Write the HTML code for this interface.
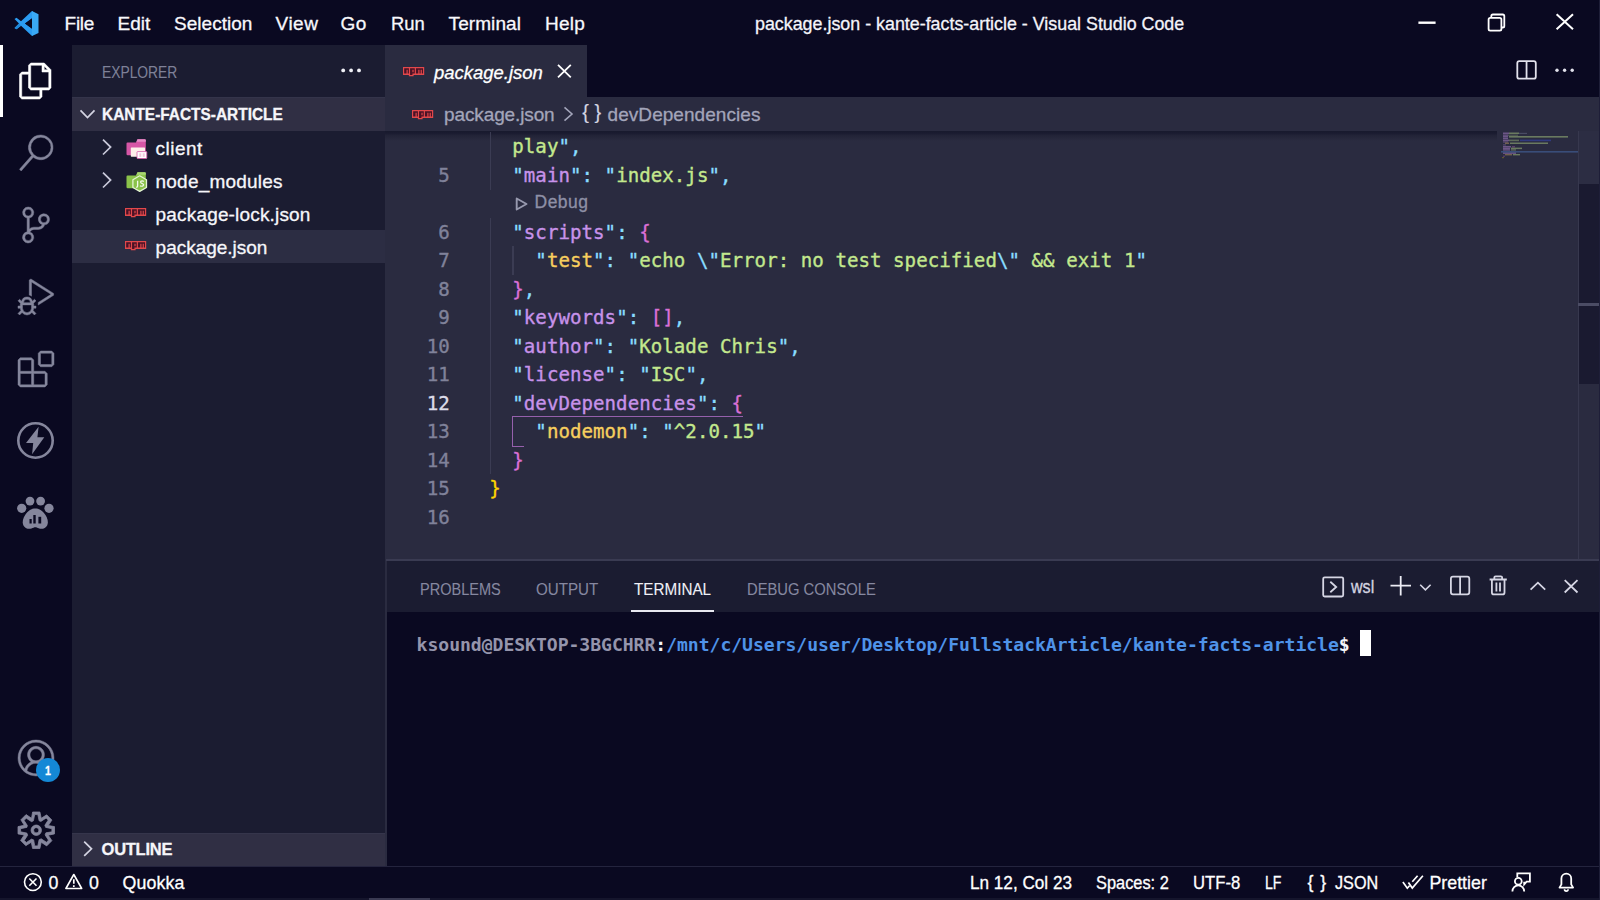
<!DOCTYPE html><html lang="en"><head><meta charset="utf-8"><title>package.json - kante-facts-article - Visual Studio Code</title>
<style>
html,body{margin:0;padding:0;background:#0a0921;}
body{width:1600px;height:900px;overflow:hidden;position:relative;font-family:"Liberation Sans", sans-serif;-webkit-font-smoothing:antialiased;}
.b{position:absolute;}
.t{position:absolute;white-space:pre;line-height:1;transform-origin:0 50%;-webkit-text-stroke:0.3px currentColor;}
.c{position:absolute;white-space:pre;line-height:1;font-family:"DejaVu Sans Mono", "Liberation Mono", monospace;font-size:19.1px;-webkit-text-stroke:0.35px currentColor;}
.tm{position:absolute;white-space:pre;line-height:1;font-family:"DejaVu Sans Mono", "Liberation Mono", monospace;font-size:18.1px;font-weight:700;}
svg{position:absolute;overflow:visible;}
</style></head><body>
<!-- layout boxes -->
<div class="b" style="left:72px;top:45px;width:313px;height:821px;background:#1b1c31"></div>
<div class="b" style="left:72px;top:97px;width:313px;height:33.5px;background:#302f44;border-top:1px solid #34344a;box-sizing:border-box"></div>
<div class="b" style="left:72px;top:230px;width:313px;height:33px;background:#2c2d43"></div>
<div class="b" style="left:72px;top:833px;width:313px;height:33px;background:#302f44;border-top:1px solid #35354b;box-sizing:border-box"></div>
<div class="b" style="left:0;top:45px;width:3px;height:72px;background:#ffffff"></div>
<!-- editor group -->
<div class="b" style="left:385px;top:45px;width:202px;height:52px;background:#2a2b40"></div>
<div class="b" style="left:385px;top:97px;width:1215px;height:463px;background:#2a2b40"></div>
<div class="b" style="left:385px;top:560px;width:2px;height:306px;background:#2a2b40"></div>
<div class="b" style="left:385px;top:130.500px;width:1112px;height:10px;background:linear-gradient(#181a2d 0%,#1a1b30 22%,rgba(31,32,52,.75) 45%,rgba(42,43,64,0) 100%)"></div>
<!-- scrollbar -->
<div class="b" style="left:1578px;top:131px;width:1px;height:429px;background:#37384e"></div>
<div class="b" style="left:1579px;top:131px;width:20px;height:53px;background:#2c2d43"></div>
<div class="b" style="left:1579px;top:184px;width:20px;height:200px;background:#1a1a30"></div>
<div class="b" style="left:1578px;top:303px;width:21px;height:3px;background:#4b4c64"></div>
<!-- current line guides etc -->
<div class="b" style="left:489.5px;top:132px;width:1.5px;height:57.5px;background:#3b3c53"></div>
<div class="b" style="left:489.5px;top:218px;width:1.5px;height:256px;background:#3b3c53"></div>
<div class="b" style="left:512px;top:246px;width:1.5px;height:28.5px;background:#3b3c53"></div>
<!-- active bracket pair guide -->
<div class="b" style="left:511.5px;top:415.5px;width:231px;height:1.5px;background:#9560ac"></div>
<div class="b" style="left:511.5px;top:415.5px;width:1.5px;height:31.5px;background:#9560ac"></div>
<div class="b" style="left:511.5px;top:445.5px;width:12px;height:1.5px;background:#9560ac"></div>
<!-- panel -->
<div class="b" style="left:386px;top:559.3px;width:1214px;height:1.5px;background:#3a3b52"></div>
<div class="b" style="left:387px;top:561px;width:1213px;height:51px;background:#1b1c31"></div>
<div class="b" style="left:631px;top:610.3px;width:83px;height:1.7px;background:#e8e8f0"></div>
<div class="b" style="left:1360px;top:630px;width:11px;height:25.6px;background:#ffffff"></div>
<!-- status bar -->
<div class="b" style="left:0;top:866px;width:1600px;height:1px;background:#24243e"></div>
<div class="b" style="left:0;top:898.300px;width:1600px;height:1.700px;background:#15152c"></div>
<div class="b" style="left:369px;top:898.300px;width:61px;height:1.700px;background:#3a3a52"></div>
<div class="b" style="left:1599px;top:0;width:1px;height:900px;background:#1e1e38"></div>
<!-- minimap -->
<svg style="left:1500px;top:131px" width="78" height="30" viewBox="1500 131 78 30">
<g opacity=".42">
<rect x="1503" y="132.500" width="6" height="1.500" fill="#c792ea"/><rect x="1509" y="132.500" width="10" height="1.500" fill="#c3e88d"/><rect x="1519" y="132.800" width="8" height="1.200" fill="#a6accd" opacity=".6"/>
<rect x="1503" y="134.500" width="5" height="1.300" fill="#c792ea"/><rect x="1508" y="134.600" width="10" height="1.200" fill="#c3e88d" opacity=".6"/>
<rect x="1503" y="136" width="5" height="1.600" fill="#c792ea"/><rect x="1509" y="136" width="59" height="1.600" fill="#c3e88d"/>
<rect x="1503" y="138" width="5" height="1.200" fill="#c792ea"/>
<rect x="1503" y="139.600" width="6" height="1.600" fill="#c792ea"/><rect x="1509" y="139.600" width="10" height="1.600" fill="#c3e88d" opacity=".8"/><rect x="1520" y="139.600" width="31" height="1.600" fill="#3c50d8"/>
<rect x="1503" y="141.400" width="5" height="1.200" fill="#c792ea" opacity=".8"/>
<rect x="1505" y="142.500" width="4" height="1.500" fill="#ffcb6b" opacity=".8"/><rect x="1510" y="142.500" width="38" height="1.500" fill="#c3e88d"/>
<rect x="1503" y="144.300" width="3" height="1.200" fill="#c792ea" opacity=".7"/>
<rect x="1503" y="146" width="8" height="1.500" fill="#c792ea"/><rect x="1512" y="146" width="3" height="1.500" fill="#da70d6" opacity=".7"/>
<rect x="1503" y="147.600" width="7" height="1.500" fill="#c792ea"/><rect x="1511" y="147.600" width="11" height="1.500" fill="#c3e88d"/>
<rect x="1503" y="149.200" width="7" height="1.400" fill="#c792ea"/><rect x="1511" y="149.200" width="5" height="1.400" fill="#c3e88d" opacity=".8"/>
<rect x="1503" y="152.400" width="13" height="1.500" fill="#c792ea"/>
<rect x="1505" y="154" width="7" height="1.400" fill="#ffcb6b" opacity=".8"/><rect x="1513" y="154" width="7" height="1.400" fill="#c3e88d"/>
<rect x="1503" y="155.600" width="2" height="1.200" fill="#da70d6" opacity=".7"/>
<rect x="1502" y="157" width="2" height="1.200" fill="#ffd700" opacity=".6"/>
</g>
<rect x="1501" y="151" width="77" height="1.600" fill="#3f5a8c" opacity=".75"/>
</svg>

<!-- ===== icons ===== -->
<!-- vscode logo -->
<svg style="left:14px;top:10.500px" width="25" height="25" viewBox="0 0 100 100">
<path d="M72 0 28 41 10 27 2 32 20 50 2 68 10 73 28 59 72 100 74 99V71L44 50 74 29V1z" fill="#2b9cf2"/>
<path d="M10 73 2 68 20 50 28 59z" fill="#1f86d6"/>
<path d="M72 0 98 12.500v75L72 100z" fill="#3aa9f5"/>
<path d="M72 29v42L44 50z" fill="#0a0921"/>
</svg>
<!-- activity bar -->
<svg style="left:18px;top:63px" width="36" height="36" viewBox="0 0 24 24" fill="#ffffff" stroke="#ffffff" stroke-width=".35"><path d="M17.5 0h-9L7 1.5V6H2.500L1 7.500v15.070L2.500 24h12.070L16 22.570V18h4.700l1.300-1.430V4.500L17.500 0zm0 2.120l2.380 2.380H17.500V2.120zm-3 20.380h-12v-15H7v9.070L8.500 18h6v4.500zm6-6h-12v-15H16V6h4.500v10.500z"/></svg>
<svg style="left:18px;top:135px" width="36" height="36" viewBox="0 0 24 24" fill="#85869c" stroke="#85869c" stroke-width=".3"><path d="M15.250 0a8.250 8.250 0 0 0-6.180 13.720L1 22.880l1.120 1.120 8.050-9.120A8.251 8.251 0 1 0 15.250.010V0zm0 15a6.750 6.750 0 1 1 0-13.500 6.750 6.750 0 0 1 0 13.500z"/></svg>
<svg style="left:18px;top:207px" width="36" height="36" viewBox="0 0 24 24" fill="#85869c" stroke="#85869c" stroke-width=".3"><path d="M21.007 8.222A3.738 3.738 0 0 0 15.045 5.200a3.737 3.737 0 0 0 1.156 6.583 2.988 2.988 0 0 1-2.668 1.670h-2.990a4.456 4.456 0 0 0-2.989 1.165V7.400a3.737 3.737 0 1 0-1.494 0v9.117a3.776 3.776 0 1 0 1.816.099 2.990 2.990 0 0 1 2.668-1.667h2.990a4.484 4.484 0 0 0 4.223-3.039 3.736 3.736 0 0 0 3.250-3.687zM4.565 3.738a2.242 2.242 0 1 1 4.484 0 2.242 2.242 0 0 1-4.484 0zm4.484 16.441a2.242 2.242 0 1 1-4.484 0 2.242 2.242 0 0 1 4.484 0zm8.221-9.715a2.242 2.242 0 1 1 0-4.485 2.242 2.242 0 0 1 0 4.485z"/></svg>
<svg style="left:18px;top:279px" width="36" height="36" viewBox="0 0 24 24" fill="#85869c" stroke="#85869c" stroke-width=".3"><path d="M10.940 13.500l-1.320 1.320a3.730 3.730 0 0 0-7.240 0L1.060 13.500 0 14.560l1.720 1.720-.22.220V18H0v1.500h1.500v.080c.077.489.214.966.410 1.420L0 22.940 1.060 24l1.650-1.650A4.308 4.308 0 0 0 6 24a4.310 4.310 0 0 0 3.290-1.650L10.940 24 12 22.940 10.090 21c.198-.464.336-.951.410-1.450v-.100H12V18h-1.500v-1.500l-.22-.22L12 14.560l-1.060-1.060zM6 13.500a2.250 2.250 0 0 1 2.250 2.250h-4.500A2.250 2.250 0 0 1 6 13.500zm3 6a3.330 3.330 0 0 1-3 3 3.330 3.330 0 0 1-3-3v-2.250h6v2.250zm14.760-9.900v1.260L13.500 17.370V15.600l8.500-5.370L9 2v9.460a5.070 5.070 0 0 0-1.500-.72V.630L8.640 0l15.120 9.600z"/></svg>
<svg style="left:18px;top:351px" width="36" height="36" viewBox="0 0 24 24" fill="#85869c" stroke="#85869c" stroke-width=".3"><path d="M13.500 1.500L15 0h7.500L24 1.500V9l-1.500 1.500H15L13.500 9V1.500zm1.500 0V9h7.500V1.500H15zM0 15V6l1.500-1.500H9L10.500 6v7.500H18l1.500 1.500v7.500L18 24H1.500L0 22.500V15zm9-1.500V6H1.500v7.500H9zM9 15H1.500v7.500H9V15zm1.500 7.500H18V15h-7.500v7.500z"/></svg>
<!-- thunder -->
<svg style="left:16px;top:421px" width="40" height="40" viewBox="16 421 40 40"><circle cx="35.5" cy="440.5" r="17.2" fill="none" stroke="#85869c" stroke-width="2.600"/><path d="M38.600 426.800 26 443h7.200l-1.100 11.200 12.200-16.900h-6.900z" fill="#85869c"/></svg>
<!-- paw -->
<svg style="left:16px;top:494px" width="40" height="38" viewBox="16 494 40 38" fill="#85869c"><circle cx="21.700" cy="508.300" r="4.600"/><circle cx="30" cy="501.100" r="4.400"/><circle cx="40.600" cy="501.100" r="4.400"/><circle cx="49" cy="508.300" r="4.600"/>
<path d="M35.300 508.600c4.200 0 7.600 2.600 10 6.200 2.200 3.300 3.400 7.300 2 10.400-1.500 3.300-5.300 4.200-8.200 3.300-1.500-.5-2.600-1.200-3.800-1.200s-2.300.7-3.800 1.200c-2.900.9-6.700 0-8.200-3.300-1.400-3.100-.2-7.100 2-10.400 2.400-3.600 5.800-6.200 10-6.200z"/>
<rect x="29.500" y="519" width="2.200" height="4.500" fill="#0a0921"/><rect x="33.300" y="515" width="2.400" height="8.500" fill="#0a0921"/><rect x="38.400" y="516.800" width="2.800" height="6.700" fill="#0a0921"/></svg>
<!-- account -->
<svg style="left:17.500px;top:740px" width="36" height="36" viewBox="0 0 16 16" fill="#85869c" stroke="#85869c" stroke-width=".2"><path d="M16 7.992C16 3.580 12.416 0 8 0S0 3.580 0 7.992c0 2.430 1.104 4.620 2.832 6.090.016.016.032.016.032.032.144.112.288.224.448.336.080.048.144.111.224.175A7.980 7.980 0 0 0 8.016 16a7.980 7.980 0 0 0 4.480-1.375c.080-.048.144-.111.224-.160.144-.111.304-.223.448-.335.016-.016.032-.016.032-.032 1.696-1.487 2.800-3.676 2.800-6.106zm-8 7.001c-1.504 0-2.880-.480-4.016-1.279.016-.128.048-.255.080-.383a4.170 4.170 0 0 1 .416-.991c.176-.304.384-.576.640-.816.240-.240.528-.463.816-.639.304-.176.624-.304.976-.400A4.150 4.150 0 0 1 8 10.342a4.185 4.185 0 0 1 2.928 1.166c.368.368.656.800.864 1.295.112.288.192.592.240.911A7.030 7.030 0 0 1 8 14.993zm-2.448-7.400a2.490 2.490 0 0 1-.208-1.024c0-.351.064-.703.208-1.023.144-.320.336-.607.576-.847.240-.240.528-.431.848-.575.320-.144.672-.208 1.024-.208.368 0 .704.064 1.024.208.320.144.608.336.848.575.240.240.432.528.576.847.144.320.208.672.208 1.023 0 .368-.064.704-.208 1.023a2.840 2.840 0 0 1-.576.848 2.840 2.840 0 0 1-.848.575 2.715 2.715 0 0 1-2.064 0 2.840 2.840 0 0 1-.848-.575 2.526 2.526 0 0 1-.560-.848zm7.424 5.306c0-.032-.016-.048-.016-.080a5.220 5.220 0 0 0-.688-1.406 4.883 4.883 0 0 0-1.088-1.135 5.207 5.207 0 0 0-1.040-.608 2.820 2.820 0 0 0 .464-.383 4.200 4.200 0 0 0 .624-.784 3.624 3.624 0 0 0 .528-1.934 3.710 3.710 0 0 0-.288-1.470 3.799 3.799 0 0 0-.816-1.199 3.845 3.845 0 0 0-1.200-.800 3.720 3.720 0 0 0-1.472-.287 3.720 3.720 0 0 0-1.472.288 3.631 3.631 0 0 0-1.200.815 3.840 3.840 0 0 0-.800 1.199 3.710 3.710 0 0 0-.288 1.470c0 .352.048.688.144 1.007.096.336.224.640.400.927.160.288.384.544.624.784.144.144.304.271.480.383a5.120 5.120 0 0 0-1.040.624c-.416.320-.784.703-1.088 1.119a4.999 4.999 0 0 0-.688 1.406c-.016.032-.016.064-.016.080C1.776 11.636.992 9.910.992 7.992.992 4.140 4.144.991 8 .991s7.008 3.149 7.008 7.001a6.960 6.960 0 0 1-2.032 4.907z"/></svg>
<svg style="left:36px;top:757.700px" width="24" height="24" viewBox="0 0 24 24"><circle cx="12" cy="12" r="12" fill="#1488d6"/></svg>
<!-- gear -->
<svg style="left:17.500px;top:811.700px" width="36.500" height="36.500" viewBox="1 1 14 14" fill="#85869c" stroke="#85869c" stroke-width=".3"><path d="M9.100 4.400L8.600 2H7.400l-.5 2.400-.7.300-2-1.300-.9.800 1.300 2-.2.700-2.400.5v1.200l2.400.5.300.8-1.300 2 .8.800 2-1.300.8.300.4 2.300h1.200l.5-2.400.8-.3 2 1.300.8-.8-1.300-2 .3-.8 2.300-.4V7.400l-2.400-.5-.3-.8 1.300-2-.8-.8-2 1.300-.7-.2zM9.400 1l.5 2.400L12 2.100l2 2-1.400 2.100 2.400.4v2.800l-2.400.5L14 12l-2 2-2.100-1.400-.5 2.400H6.600l-.5-2.400L4 13.900l-2-2 1.400-2.100L1 9.400V6.600l2.400-.5L2.100 4l2-2 2.100 1.400.4-2.400h2.800zm.6 7c0 1.100-.9 2-2 2s-2-.9-2-2 .9-2 2-2 2 .9 2 2zM8 9c.6 0 1-.4 1-1s-.4-1-1-1-1 .4-1 1 .4 1 1 1z"/></svg>
<!-- sidebar: more dots -->
<svg style="left:340px;top:66px" width="22" height="9" viewBox="340 66 22 9" fill="#f0f0f6"><circle cx="343.200" cy="70.400" r="1.900"/><circle cx="351.100" cy="70.400" r="1.900"/><circle cx="359" cy="70.400" r="1.900"/></svg>
<!-- chevrons -->
<svg style="left:78px;top:106px" width="20" height="16" viewBox="78 106 20 16" fill="none" stroke="#d4d4e2" stroke-width="1.700"><path d="M80.500 110.300 87.500 117.600 94.500 110.300"/></svg>
<svg style="left:100px;top:137px" width="14" height="20" viewBox="100 137 14 20" fill="none" stroke="#c9c9da" stroke-width="1.700"><path d="M103 139.700 110.600 147.100 103 154.500"/></svg>
<svg style="left:100px;top:170px" width="14" height="20" viewBox="100 170 14 20" fill="none" stroke="#c9c9da" stroke-width="1.700"><path d="M103 172.700 110.600 180.100 103 187.500"/></svg>
<svg style="left:80px;top:839px" width="14" height="20" viewBox="80 839 14 20" fill="none" stroke="#d4d4e2" stroke-width="1.700"><path d="M84.200 841.700 91.500 848.800 84.200 855.900"/></svg>
<!-- folder client -->
<svg style="left:124px;top:137px" width="26" height="24" viewBox="124 137 26 24">
<path d="M126.500 143.500a1 1 0 0 1 1-1h8.500l1.500-3.200h7.300a1 1 0 0 1 1 1v13.800a1.200 1.200 0 0 1-1.200 1.200H127.700a1.200 1.200 0 0 1-1.200-1.200z" fill="#d656a6"/>
<path d="M137.500 139.300h7.300a1 1 0 0 1 1 1v1.400h-9.400z" fill="#e58bc6"/>
<rect x="130.800" y="147.400" width="14.200" height="9.300" rx=".6" fill="#fdf0ea"/>
<rect x="137" y="151.600" width="9.800" height="6.900" rx=".6" fill="#ffffff" stroke="#d656a6" stroke-width=".8"/>
<rect x="139.300" y="153.300" width="2" height="3.600" fill="#f3c8dc"/><rect x="142.700" y="153.300" width="2" height="3.600" fill="#f3c8dc"/>
</svg>
<!-- folder node -->
<svg style="left:124px;top:170px" width="26" height="24" viewBox="124 170 26 24">
<path d="M126.500 176.500a1 1 0 0 1 1-1h8.500l1.500-3.200h7.300a1 1 0 0 1 1 1v13.800a1.200 1.200 0 0 1-1.200 1.200H127.700a1.200 1.200 0 0 1-1.200-1.200z" fill="#8bc34a"/>
<path d="M137.500 172.300h7.300a1 1 0 0 1 1 1v1.400h-9.400z" fill="#a9d672"/>
<path d="M139.700 175.800 146.500 179.700v7.800L139.700 191.400 132.900 187.500v-7.800z" fill="#8bc34a" stroke="#e4f3d2" stroke-width="1.300" stroke-linejoin="round"/>
<path d="M137.600 180.800v5.200q0 1.300-1.500 1.100" fill="none" stroke="#f2f9ea" stroke-width="1.300"/>
<path d="M143.800 181.500q-1.200-.9-2.500-.4-1.300.8-.1 1.900l1.800.9q1.300.9 0 2-1.500.8-3-.2" fill="none" stroke="#f2f9ea" stroke-width="1.200"/>
</svg>
<!-- npm icons -->
<svg style="left:124.90px;top:208.00px" width="21.20" height="9.20" viewBox="0 0 18 7" preserveAspectRatio="none"><path d="M0 0h18v6H9v1H5V6H0z" fill="#e2484b"/><path d="M1 1h4v4H4V2H3v3H1zM6 1h4v4H8v1H6zM11 1h6v4h-1V2h-1v3h-1V2h-1v3h-2z" fill="#4a1226"/><path d="M8 2h1v2H8z" fill="#e2484b"/></svg>
<svg style="left:124.90px;top:241.20px" width="21.20" height="9.20" viewBox="0 0 18 7" preserveAspectRatio="none"><path d="M0 0h18v6H9v1H5V6H0z" fill="#e2484b"/><path d="M1 1h4v4H4V2H3v3H1zM6 1h4v4H8v1H6zM11 1h6v4h-1V2h-1v3h-1V2h-1v3h-2z" fill="#4a1226"/><path d="M8 2h1v2H8z" fill="#e2484b"/></svg>
<svg style="left:403.00px;top:66.60px" width="21.20" height="9.20" viewBox="0 0 18 7" preserveAspectRatio="none"><path d="M0 0h18v6H9v1H5V6H0z" fill="#e2484b"/><path d="M1 1h4v4H4V2H3v3H1zM6 1h4v4H8v1H6zM11 1h6v4h-1V2h-1v3h-1V2h-1v3h-2z" fill="#4a1226"/><path d="M8 2h1v2H8z" fill="#e2484b"/></svg>
<svg style="left:411.70px;top:110.40px" width="21.20" height="9.20" viewBox="0 0 18 7" preserveAspectRatio="none"><path d="M0 0h18v6H9v1H5V6H0z" fill="#e2484b"/><path d="M1 1h4v4H4V2H3v3H1zM6 1h4v4H8v1H6zM11 1h6v4h-1V2h-1v3h-1V2h-1v3h-2z" fill="#4a1226"/><path d="M8 2h1v2H8z" fill="#e2484b"/></svg>
<!-- window controls -->
<svg style="left:1410px;top:8px" width="180" height="30" viewBox="1410 8 180 30" fill="none" stroke="#ffffff" stroke-width="2">
<path d="M1418.400 22.700H1435.600" stroke-width="2.400"/>
<path d="M1491.300 17.400v-1.300a1.600 1.600 0 0 1 1.600-1.600h9.800a1.600 1.600 0 0 1 1.600 1.600v9.800a1.600 1.600 0 0 1-1.600 1.600h-1.300" stroke-width="1.800"/>
<rect x="1488.600" y="17.800" width="12.800" height="12.800" rx="1.600" stroke-width="1.800"/>
<path d="M1556.600 14.300 1573 29.300M1573 14.300 1556.600 29.300"/>
</svg>
<!-- tab actions -->
<svg style="left:1510px;top:56px" width="70" height="28" viewBox="1510 56 70 28"><rect x="1517.300" y="61.200" width="18.500" height="17.500" rx="2" fill="none" stroke="#e2e2ec" stroke-width="1.800"/><path d="M1526.550 61.200v17.500" stroke="#e2e2ec" stroke-width="1.800"/><circle cx="1557" cy="70.300" r="1.700" fill="#e2e2ec"/><circle cx="1564.600" cy="70.300" r="1.700" fill="#e2e2ec"/><circle cx="1572.200" cy="70.300" r="1.700" fill="#e2e2ec"/></svg>
<!-- tab close -->
<svg style="left:554px;top:61px" width="20" height="20" viewBox="554 61 20 20" fill="none" stroke="#ffffff" stroke-width="1.800"><path d="M558 64.900 570.800 77.300M570.800 64.900 558 77.300"/></svg>
<!-- breadcrumb chevron -->
<svg style="left:560px;top:105px" width="16" height="20" viewBox="560 105 16 20" fill="none" stroke="#a3a5ba" stroke-width="1.600"><path d="M564.500 107.300 572 114 564.500 120.700"/></svg>
<!-- codelens triangle -->
<svg style="left:512px;top:194px" width="20" height="20" viewBox="512 194 20 20" fill="none" stroke="#9799ae" stroke-width="1.900" stroke-linejoin="round"><path d="M516.700 198.500 526.500 204 516.700 209.500z"/></svg>
<!-- panel actions -->
<svg style="left:1316px;top:570px" width="270" height="32" viewBox="1316 570 270 32" fill="none" stroke="#d6d6e4" stroke-width="1.800">
<rect x="1323.200" y="577.300" width="20" height="19.200" rx="1.500"/>
<path d="M1330.300 581.800 1336.200 587 1330.300 592.200"/>
<path d="M1390.500 585.700H1411M1400.700 575.900V595.600" stroke="#ececf4"/>
<path d="M1420.200 584.700 1425.400 589.900 1430.600 584.700" stroke-width="1.600"/>
<rect x="1450.900" y="576.700" width="18.400" height="17.600" rx="2"/><path d="M1460.100 576.700v17.600"/>
<path d="M1489.600 579.500H1506.800M1494.300 579.300v-1.700a1.300 1.300 0 0 1 1.300-1.300h5.200a1.300 1.300 0 0 1 1.300 1.300v1.700M1491.900 580v12.400a2 2 0 0 0 2 2h8.600a2 2 0 0 0 2-2V580M1496.400 582.500v9M1500 582.500v9"/>
<path d="M1530.600 589.600 1537.900 582.700 1545.200 589.600"/>
<path d="M1564.700 580.200 1577.500 592.500M1577.500 580.200 1564.700 592.500"/>
</svg>
<!-- status icons -->
<svg style="left:20px;top:868px" width="70" height="28" viewBox="20 868 70 28" fill="none" stroke="#ffffff" stroke-width="1.600">
<circle cx="32.900" cy="882.100" r="8.400"/><path d="M29.300 878.500 36.500 885.700M36.500 878.500 29.300 885.700"/>
<path d="M73.800 874.500 81.700 888.500H65.900z" stroke-linejoin="round"/><path d="M73.800 879.200v4.600M73.800 885.300v1.700" stroke-width="1.700"/>
</svg>
<svg style="left:1398px;top:868px" width="190" height="30" viewBox="1398 868 190 30" fill="none" stroke="#ffffff" stroke-width="1.700">
<path d="M1402.900 882 1407.300 888.200 1409.500 885.700M1408.400 882.400 1412.300 888 1422.900 875.700M1412.300 881.800 1417.600 875.700"/>
<path d="M1517.300 877v-3.600h12.600v8.300h-3.300l-2.400 2.700v-2.700" stroke-width="1.800"/><circle cx="1518.300" cy="881.300" r="3.400" stroke-width="1.800"/><path d="M1512.400 891.400a5.900 6.100 0 0 1 11.800 0" stroke-width="1.800"/>
<path d="M1559.500 887.600 1561.400 884.400V878.500a4.900 4.900 0 0 1 9.800 0V884.400L1573.100 887.600Z" stroke-width="1.800" stroke-linejoin="round"/><path d="M1564.500 889.300a1.800 1.800 0 0 0 3.600 0" stroke-width="1.600"/>
</svg>

<span class="t" style="left:64.60px;top:13.60px;font-size:19px;color:#f8f8fc;letter-spacing:-0.275px">File</span>
<span class="t" style="left:117.60px;top:13.60px;font-size:19px;color:#f8f8fc;letter-spacing:0.017px">Edit</span>
<span class="t" style="left:174.10px;top:13.60px;font-size:19px;color:#f8f8fc;letter-spacing:0.016px">Selection</span>
<span class="t" style="left:275.60px;top:13.60px;font-size:19px;color:#f8f8fc;letter-spacing:0.485px">View</span>
<span class="t" style="left:340.60px;top:13.60px;font-size:19px;color:#f8f8fc;letter-spacing:0.441px">Go</span>
<span class="t" style="left:390.60px;top:13.60px;font-size:19px;color:#f8f8fc;transform:scaleX(0.9696)">Run</span>
<span class="t" style="left:448.60px;top:13.60px;font-size:19px;color:#f8f8fc;letter-spacing:0.070px">Terminal</span>
<span class="t" style="left:545.10px;top:13.60px;font-size:19px;color:#f8f8fc;letter-spacing:0.241px">Help</span>
<span class="t" style="left:755.40px;top:13.80px;font-size:19px;color:#f4f4fa;transform:scaleX(0.9393)">package.json - kante-facts-article - Visual Studio Code</span>
<span class="t" style="left:102.10px;top:64.00px;font-size:16.5px;color:#7f8198;transform:scaleX(0.8378);-webkit-text-stroke-width:0.1px">EXPLORER</span>
<span class="t" style="left:102.10px;top:106.00px;font-size:16.5px;color:#f6f6fa;font-weight:700;transform:scaleX(0.9348)">KANTE-FACTS-ARTICLE</span>
<span class="t" style="left:155.60px;top:138.50px;font-size:19px;color:#f6f6fa;letter-spacing:0.488px">client</span>
<span class="t" style="left:155.60px;top:171.50px;font-size:19px;color:#f6f6fa;letter-spacing:0.195px">node_modules</span>
<span class="t" style="left:155.60px;top:204.50px;font-size:19px;color:#f6f6fa;letter-spacing:0.169px">package-lock.json</span>
<span class="t" style="left:155.60px;top:237.50px;font-size:19px;color:#f6f6fa;letter-spacing:-0.015px">package.json</span>
<span class="t" style="left:101.60px;top:840.50px;font-size:16.5px;color:#f6f6fa;font-weight:700;letter-spacing:-0.270px">OUTLINE</span>
<span class="t" style="left:44.80px;top:764.00px;font-size:13.5px;color:#ffffff;font-weight:700;transform:scaleX(0.7850)">1</span>
<span class="t" style="left:48.60px;top:874.90px;font-size:17.8px;color:#ffffff;letter-spacing:-0.091px">0</span>
<span class="t" style="left:89.10px;top:874.90px;font-size:17.8px;color:#ffffff;letter-spacing:0.409px">0</span>
<span class="t" style="left:122.60px;top:874.90px;font-size:17.8px;color:#ffffff;letter-spacing:0.104px">Quokka</span>
<span class="t" style="left:969.60px;top:874.90px;font-size:17.8px;color:#ffffff;transform:scaleX(0.9643)">Ln 12, Col 23</span>
<span class="t" style="left:1095.60px;top:874.90px;font-size:17.8px;color:#ffffff;transform:scaleX(0.9206)">Spaces: 2</span>
<span class="t" style="left:1192.90px;top:874.90px;font-size:17.8px;color:#ffffff;transform:scaleX(0.9370)">UTF-8</span>
<span class="t" style="left:1264.60px;top:874.90px;font-size:17.8px;color:#ffffff;transform:scaleX(0.7946)">LF</span>
<span class="t" style="left:1307.60px;top:874.40px;font-size:17.8px;color:#ffffff;letter-spacing:6.609px">{}</span>
<span class="t" style="left:1335.20px;top:874.90px;font-size:17.8px;color:#ffffff;transform:scaleX(0.9107)">JSON</span>
<span class="t" style="left:1429.40px;top:874.90px;font-size:17.8px;color:#ffffff;letter-spacing:0.027px">Prettier</span>
<span class="t" style="left:434.10px;top:62.75px;font-size:19px;color:#ffffff;font-style:italic;transform:scaleX(0.9717)">package.json</span>
<span class="t" style="left:444.10px;top:105.25px;font-size:19px;color:#a3a5ba;letter-spacing:-0.129px">package.json</span>
<span class="t" style="left:582.20px;top:102.20px;font-size:20px;color:#d4d5e2;letter-spacing:5.741px;-webkit-text-stroke-width:0.15px">{}</span>
<span class="t" style="left:607.60px;top:105.25px;font-size:19px;color:#a3a5ba;letter-spacing:0.048px">devDependencies</span>
<span class="t" style="left:534.60px;top:193.50px;font-size:17.5px;color:#8e90a6;letter-spacing:0.430px">Debug</span>
<span class="t" style="left:419.60px;top:580.50px;font-size:16.5px;color:#8688a0;transform:scaleX(0.8811);-webkit-text-stroke-width:0.1px">PROBLEMS</span>
<span class="t" style="left:536.10px;top:580.50px;font-size:16.5px;color:#8688a0;transform:scaleX(0.9183);-webkit-text-stroke-width:0.1px">OUTPUT</span>
<span class="t" style="left:634.35px;top:580.50px;font-size:16.5px;color:#f0f0f6;transform:scaleX(0.9234);-webkit-text-stroke-width:0.1px">TERMINAL</span>
<span class="t" style="left:746.60px;top:580.50px;font-size:16.5px;color:#8688a0;transform:scaleX(0.8947);-webkit-text-stroke-width:0.1px">DEBUG CONSOLE</span>
<span class="t" style="left:1351.20px;top:578.40px;font-size:18px;color:#d4d4e0;transform:scaleX(0.8923)">wsl</span>
<span class="c" style="left:512.28px;top:137.40px;color:#c3e88d;letter-spacing:0.043px">play</span>
<span class="c" style="left:558.44px;top:137.40px;color:#89ddff;letter-spacing:0.043px">",</span>
<span class="c" style="left:438.26px;top:165.90px;color:#80829a;letter-spacing:0.043px">5</span>
<span class="c" style="left:512.28px;top:165.90px;color:#89ddff;letter-spacing:0.043px">"</span>
<span class="c" style="left:523.82px;top:165.90px;color:#c792ea;letter-spacing:0.043px">main</span>
<span class="c" style="left:569.98px;top:165.90px;color:#89ddff;letter-spacing:0.043px">":</span>
<span class="c" style="left:604.60px;top:165.90px;color:#89ddff;letter-spacing:0.043px">"</span>
<span class="c" style="left:616.14px;top:165.90px;color:#c3e88d;letter-spacing:0.043px">index.js</span>
<span class="c" style="left:708.46px;top:165.90px;color:#89ddff;letter-spacing:0.043px">",</span>
<span class="c" style="left:438.26px;top:222.90px;color:#80829a;letter-spacing:0.043px">6</span>
<span class="c" style="left:512.28px;top:222.90px;color:#89ddff;letter-spacing:0.043px">"</span>
<span class="c" style="left:523.82px;top:222.90px;color:#c792ea;letter-spacing:0.043px">scripts</span>
<span class="c" style="left:604.60px;top:222.90px;color:#89ddff;letter-spacing:0.043px">":</span>
<span class="c" style="left:639.22px;top:222.90px;color:#da70d6;letter-spacing:0.043px">{</span>
<span class="c" style="left:438.26px;top:251.40px;color:#80829a;letter-spacing:0.043px">7</span>
<span class="c" style="left:535.36px;top:251.40px;color:#89ddff;letter-spacing:0.043px">"</span>
<span class="c" style="left:546.90px;top:251.40px;color:#f7cf5e;letter-spacing:0.043px">test</span>
<span class="c" style="left:593.06px;top:251.40px;color:#89ddff;letter-spacing:0.043px">":</span>
<span class="c" style="left:627.68px;top:251.40px;color:#89ddff;letter-spacing:0.043px">"</span>
<span class="c" style="left:639.22px;top:251.40px;color:#c3e88d;letter-spacing:0.043px">echo </span>
<span class="c" style="left:696.92px;top:251.40px;color:#89ddff;letter-spacing:0.043px">\"</span>
<span class="c" style="left:720.00px;top:251.40px;color:#c3e88d;letter-spacing:0.043px">Error: no test specified</span>
<span class="c" style="left:996.96px;top:251.40px;color:#89ddff;letter-spacing:0.043px">\"</span>
<span class="c" style="left:1020.04px;top:251.40px;color:#c3e88d;letter-spacing:0.043px"> &amp;&amp; exit 1</span>
<span class="c" style="left:1135.44px;top:251.40px;color:#89ddff;letter-spacing:0.043px">"</span>
<span class="c" style="left:438.26px;top:279.90px;color:#80829a;letter-spacing:0.043px">8</span>
<span class="c" style="left:512.28px;top:279.90px;color:#da70d6;letter-spacing:0.043px">}</span>
<span class="c" style="left:523.82px;top:279.90px;color:#89ddff;letter-spacing:0.043px">,</span>
<span class="c" style="left:438.26px;top:308.40px;color:#80829a;letter-spacing:0.043px">9</span>
<span class="c" style="left:512.28px;top:308.40px;color:#89ddff;letter-spacing:0.043px">"</span>
<span class="c" style="left:523.82px;top:308.40px;color:#c792ea;letter-spacing:0.043px">keywords</span>
<span class="c" style="left:616.14px;top:308.40px;color:#89ddff;letter-spacing:0.043px">":</span>
<span class="c" style="left:650.76px;top:308.40px;color:#da70d6;letter-spacing:0.043px">[]</span>
<span class="c" style="left:673.84px;top:308.40px;color:#89ddff;letter-spacing:0.043px">,</span>
<span class="c" style="left:426.72px;top:336.90px;color:#80829a;letter-spacing:0.043px">10</span>
<span class="c" style="left:512.28px;top:336.90px;color:#89ddff;letter-spacing:0.043px">"</span>
<span class="c" style="left:523.82px;top:336.90px;color:#c792ea;letter-spacing:0.043px">author</span>
<span class="c" style="left:593.06px;top:336.90px;color:#89ddff;letter-spacing:0.043px">":</span>
<span class="c" style="left:627.68px;top:336.90px;color:#89ddff;letter-spacing:0.043px">"</span>
<span class="c" style="left:639.22px;top:336.90px;color:#c3e88d;letter-spacing:0.043px">Kolade Chris</span>
<span class="c" style="left:777.70px;top:336.90px;color:#89ddff;letter-spacing:0.043px">",</span>
<span class="c" style="left:426.72px;top:365.40px;color:#80829a;letter-spacing:0.043px">11</span>
<span class="c" style="left:512.28px;top:365.40px;color:#89ddff;letter-spacing:0.043px">"</span>
<span class="c" style="left:523.82px;top:365.40px;color:#c792ea;letter-spacing:0.043px">license</span>
<span class="c" style="left:604.60px;top:365.40px;color:#89ddff;letter-spacing:0.043px">":</span>
<span class="c" style="left:639.22px;top:365.40px;color:#89ddff;letter-spacing:0.043px">"</span>
<span class="c" style="left:650.76px;top:365.40px;color:#c3e88d;letter-spacing:0.043px">ISC</span>
<span class="c" style="left:685.38px;top:365.40px;color:#89ddff;letter-spacing:0.043px">",</span>
<span class="c" style="left:426.72px;top:393.90px;color:#dcdce8;letter-spacing:0.043px">12</span>
<span class="c" style="left:512.28px;top:393.90px;color:#89ddff;letter-spacing:0.043px">"</span>
<span class="c" style="left:523.82px;top:393.90px;color:#c792ea;letter-spacing:0.043px">devDependencies</span>
<span class="c" style="left:696.92px;top:393.90px;color:#89ddff;letter-spacing:0.043px">":</span>
<span class="c" style="left:731.54px;top:393.90px;color:#da70d6;letter-spacing:0.043px">{</span>
<span class="c" style="left:426.72px;top:422.40px;color:#80829a;letter-spacing:0.043px">13</span>
<span class="c" style="left:535.36px;top:422.40px;color:#89ddff;letter-spacing:0.043px">"</span>
<span class="c" style="left:546.90px;top:422.40px;color:#f7cf5e;letter-spacing:0.043px">nodemon</span>
<span class="c" style="left:627.68px;top:422.40px;color:#89ddff;letter-spacing:0.043px">":</span>
<span class="c" style="left:662.30px;top:422.40px;color:#89ddff;letter-spacing:0.043px">"</span>
<span class="c" style="left:673.84px;top:422.40px;color:#c3e88d;letter-spacing:0.043px">^2.0.15</span>
<span class="c" style="left:754.62px;top:422.40px;color:#89ddff;letter-spacing:0.043px">"</span>
<span class="c" style="left:426.72px;top:450.90px;color:#80829a;letter-spacing:0.043px">14</span>
<span class="c" style="left:512.28px;top:450.90px;color:#da70d6;letter-spacing:0.043px">}</span>
<span class="c" style="left:426.72px;top:479.40px;color:#80829a;letter-spacing:0.043px">15</span>
<span class="c" style="left:489.20px;top:479.40px;color:#ffd700;letter-spacing:0.043px">}</span>
<span class="c" style="left:426.72px;top:507.90px;color:#80829a;letter-spacing:0.043px">16</span>
<span class="tm" style="left:416.60px;top:636.00px;color:#9595ac;letter-spacing:-0.044px">ksound@DESKTOP-3BGCHRR</span>
<span class="tm" style="left:655.30px;top:636.00px;color:#f4f4f8;letter-spacing:-0.044px">:</span>
<span class="tm" style="left:666.15px;top:636.00px;color:#4f93e8;letter-spacing:-0.044px">/mnt/c/Users/user/Desktop/FullstackArticle/kante-facts-article</span>
<span class="tm" style="left:1338.85px;top:636.00px;color:#f4f4f8;letter-spacing:-0.044px">$</span>
</body></html>
